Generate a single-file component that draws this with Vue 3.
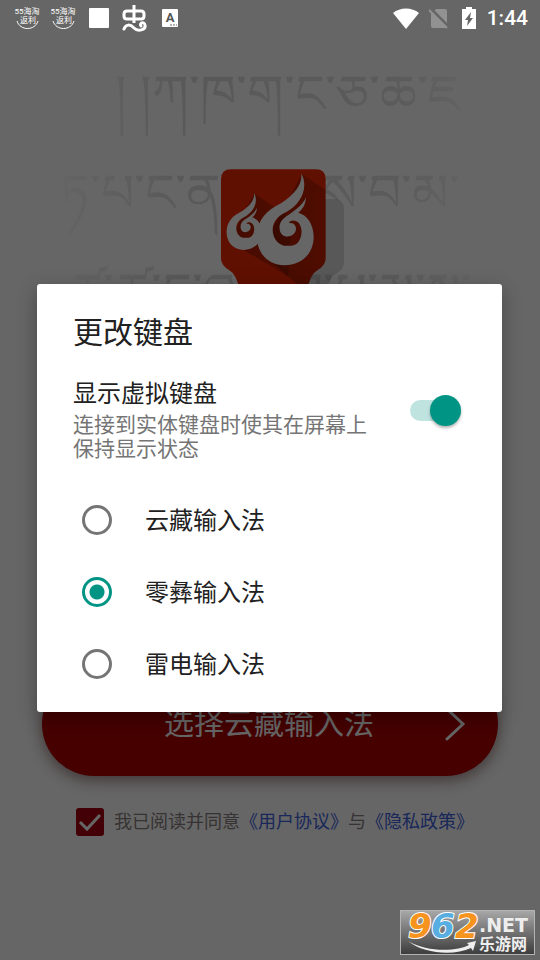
<template>
  <div class="screen">
    <header class="status-bar">
      <div class="status-group">
        <svg v-for="n in 2" :key="n" class="notice" viewBox="0 0 26 26">
          <text x="13" y="9" class="tiny">55海淘</text>
          <text x="14" y="18" class="tiny">返利</text>
          <path d="M3 16C6 26 21 26 24 16" fill="none" stroke="#fff" />
        </svg>
        <span class="square"></span>
        <svg class="worm" viewBox="0 0 26 28" fill="none" stroke="#fff" stroke-width="3">
          <path d="M12 1V19M5 7H19Q22 7 22 10V12Q22 15 19 15H5Q2 15 2 12V10Q2 7 5 7Z" />
          <path d="M2 25C4 20 8 20 12 24C16 28 24 26 23 21C22 17 17 19 19 22" stroke-linecap="round" />
        </svg>
        <svg class="letter" viewBox="0 0 16 18">
          <rect width="16" height="18" rx="1" fill="#fff" />
          <text x="8" y="13" class="letter-a">A</text>
          <path d="M8 16H10M11 16H13M14 16H15" stroke="#666" />
        </svg>
      </div>
      <div class="status-group">
        <svg class="wifi" viewBox="0 0 26 21">
          <path d="M0 5C7 -1 19 -1 26 5L13 21Z" fill="#fff" />
        </svg>
        <svg class="sim" viewBox="0 0 20 21">
          <path d="M7 1H16Q18 1 18 3V18Q18 20 16 20H4Q2 20 2 18V6Z" fill="#929292" />
          <path d="M1 0L20 19" stroke="#666" stroke-width="3" />
          <path d="M0 2L18 20" stroke="#929292" stroke-width="2" />
        </svg>
        <svg class="battery" viewBox="0 0 14 22">
          <path d="M4 0H10V2H14V22H0V2H4Z" fill="#fff" />
          <path d="M9 5L3 13H6L5 19L11 11H8Z" fill="#666" />
        </svg>
        <time class="clock">1:44</time>
      </div>
    </header>

    <main class="app">
      <svg class="hero" viewBox="0 36 540 294" aria-hidden="true">
        <defs>
          <linearGradient id="fade" gradientUnits="userSpaceOnUse" x1="60" x2="480" y1="0" y2="0">
            <stop offset="0" stop-color="#000" stop-opacity="0.02" />
            <stop offset="0.3" stop-color="#000" stop-opacity="0.13" />
            <stop offset="0.8" stop-color="#000" stop-opacity="0.11" />
            <stop offset="1" stop-color="#000" stop-opacity="0.02" />
          </linearGradient>
          <linearGradient id="shade" x1="0" x2="1">
            <stop offset="0" stop-color="#000" stop-opacity="0.3" />
            <stop offset="1" stop-color="#000" stop-opacity="0.15" />
          </linearGradient>
          <clipPath id="badge-clip">
            <path :d="badgePath" />
          </clipPath>
        </defs>
        <g class="script" fill="url(#fade)">
          <text x="115" y="112">། །ཀ་ཁ་ག་ང་ཅ་ཆ་ཇ</text>
          <text x="60" y="211">ཏ་པ་ང་ན</text>
          <text x="460" y="211" text-anchor="end">ས་བ་མ་</text>
          <text x="70" y="310">ཙ་ཚ་ད་ཞ་ཟ་བ་པ་མ་ས་</text>
        </g>
        <g transform="translate(205 160) scale(.3333)">
          <path d="M350 117H387Q417 117 417 147V310Q415 330 395 340Q375 350 365 390H300V117Z" fill="#000" opacity="0.14" />
          <path :d="badgePath" fill="#f02800" />
          <g clip-path="url(#badge-clip)" fill="url(#shade)">
            <path d="M290 42L400 116V420H330L165 275L250 120Z" />
            <path d="M148 100L260 178L250 350L75 245L120 150Z" />
          </g>
          <path :d="flamePath" fill="#fff" />
          <path :d="flamePath" fill="#fff" transform="translate(-32 74) scale(.62)" />
        </g>
      </svg>

      <button class="pick-btn" type="button">
        <span class="pick-label">选择云藏输入法</span>
        <svg class="chevron" viewBox="0 0 22 34">
          <path d="M3 2L19 17L3 32" fill="none" stroke="#fff" stroke-width="3" stroke-linecap="round" />
        </svg>
      </button>

      <div class="agreement">
        <input id="agree" v-model="agreed" class="agree-box" type="checkbox" />
        <label for="agree">我已阅读并同意</label>
        <a href="#terms">《用户协议》</a>
        <span>与</span>
        <a href="#privacy">《隐私政策》</a>
      </div>
    </main>

    <div class="scrim">
      <section class="dialog" role="dialog" aria-labelledby="dialog-title">
        <h1 id="dialog-title">更改键盘</h1>
        <label class="switch-row">
          <span class="switch-text">
            <span class="switch-name">显示虚拟键盘</span>
            <span class="switch-summary">连接到实体键盘时使其在屏幕上保持显示状态</span>
          </span>
          <input v-model="showKeyboard" class="switch" type="checkbox" />
        </label>
        <label v-for="item in keyboards" :key="item" class="option">
          <input v-model="selected" class="radio" type="radio" name="keyboard" :value="item" />
          <span class="option-name">{{ item }}</span>
        </label>
      </section>
    </div>

    <svg class="site-mark" viewBox="0 0 135 45">
      <defs>
        <linearGradient id="plate" x2="0" y2="1">
          <stop offset="0" stop-color="#a8a8a8" />
          <stop offset="1" stop-color="#3c3c3c" />
        </linearGradient>
      </defs>
      <rect x="0.5" y="0.5" width="134" height="44" fill="url(#plate)" stroke="#b4b4b4" />
      <g class="digits">
        <text x="8" y="28" fill="#f7941d">9</text>
        <text x="31" y="28" fill="#58aee0">6</text>
        <text x="55" y="28" fill="#f7941d">2</text>
      </g>
      <path d="M8 31C28 43 58 41 69 35L67 33L76 31L73 41L71 38C54 46 24 44 8 31Z" fill="#eee" />
      <text x="79" y="22" class="net">.NET</text>
      <text x="79" y="40" class="site-name">乐游网</text>
    </svg>
  </div>
</template>

<script setup>
import { ref } from "vue";

const keyboards = ["云藏输入法", "零彝输入法", "雷电输入法"];
const selected = ref("零彝输入法");
const showKeyboard = ref(true);
const agreed = ref(true);

const badgePath =
  "M78 28H332Q362 28 362 58V298Q360 318 338 330Q316 342 306 390H104Q94 342 72 330Q50 318 48 298V58Q48 28 78 28Z";
const flamePath =
  "M289 40C292 72 272 100 228 130C185 150 158 180 156 225C154 280 190 315 238 316C290 316 327 280 326 228C325 190 305 165 280 158C296 146 302 130 303 112C294 134 270 152 250 165C228 178 222 192 224 208C226 226 240 232 252 229C268 226 276 212 272 200C268 190 260 188 252 190C254 180 272 178 282 190C294 206 291 232 280 246C274 254 265 257 258 257L236 257C214 250 203 232 203 208C204 184 220 166 245 155C285 134 313 85 289 40Z";
</script>

<style>
body {
  background: #fff;
}
</style>

<style scoped>
.screen {
  position: relative;
  display: flex;
  flex-direction: column;
  min-height: 100vh;
  overflow: hidden;
  font-family: Roboto, "Noto Sans CJK SC", sans-serif;
}
.status-bar {
  position: relative;
  z-index: 2;
  display: flex;
  justify-content: space-between;
  height: 36px;
  padding: 0 12px 0 14px;
}
.status-group {
  display: flex;
  align-items: center;
  gap: 10px;
}
.notice {
  width: 26px;
  height: 26px;
}
.tiny {
  font-size: 8px;
  fill: #fff;
  text-anchor: middle;
}
.square {
  width: 20px;
  height: 20px;
  margin: 0 3px;
  border-radius: 1px;
  background: #fff;
}
.worm {
  width: 26px;
  height: 28px;
}
.letter {
  width: 16px;
  height: 18px;
  margin-left: 4px;
}
.letter-a {
  font-size: 13px;
  font-weight: 700;
  fill: #555;
  text-anchor: middle;
}
.wifi {
  width: 26px;
  height: 21px;
}
.sim {
  width: 20px;
  height: 21px;
}
.battery {
  width: 14px;
  height: 22px;
  margin-left: 3px;
}
.clock {
  margin-left: 1px;
  color: #fff;
  font-size: 21px;
  font-weight: 500;
}
.app {
  display: flex;
  flex: 1;
  flex-direction: column;
}
.hero {
  width: 100%;
}
.script {
  font-size: 52px;
}
.pick-btn {
  display: flex;
  align-items: center;
  height: 104px;
  margin: auto 42px 0;
  padding: 0 32px 0 30px;
  border: none;
  border-radius: 52px;
  background: #b00000;
  box-shadow: 0 4px 16px rgba(60, 0, 0, 0.5);
  color: #fff;
  font-family: inherit;
  font-size: 30px;
  cursor: pointer;
}
.pick-label {
  flex: 1;
  padding: 0 0 6px 22px;
}
.chevron {
  width: 22px;
  height: 34px;
}
.agreement {
  display: flex;
  align-items: center;
  justify-content: center;
  margin: 32px 0 124px;
  padding-left: 10px;
  color: #8a8080;
  font-size: 18px;
  line-height: 28px;
}
.agreement a {
  color: #4062e0;
  text-decoration: none;
}
.agree-box {
  width: 28px;
  height: 28px;
  margin: 0 10px 0 0;
  border-radius: 3px;
  appearance: none;
  background: #a80010;
}
.agree-box:checked {
  background: #a80010
    url("data:image/svg+xml,%3Csvg xmlns='http://www.w3.org/2000/svg' viewBox='0 0 28 28'%3E%3Cpath d='M4 14l7 7L24 7' fill='none' stroke='white' stroke-width='3'/%3E%3C/svg%3E");
}
.scrim {
  position: absolute;
  inset: 0;
  z-index: 1;
  display: flex;
  align-items: center;
  padding: 36px 38px 0 37px;
  background: rgba(0, 0, 0, 0.6);
}
.dialog {
  flex: 1;
  padding: 27px 36px 12px;
  border-radius: 3px;
  background: #fff;
  box-shadow: 0 6px 20px rgba(0, 0, 0, 0.3);
  color: #212121;
}
.dialog h1 {
  margin: 0 0 23px;
  font-size: 30px;
  font-weight: 400;
  line-height: 44px;
}
.switch-row {
  display: flex;
  align-items: flex-start;
  justify-content: space-between;
  padding-bottom: 23px;
}
.switch-text {
  display: flex;
  flex-direction: column;
  gap: 3px;
  max-width: 300px;
}
.switch-name {
  font-size: 24px;
  line-height: 32px;
}
.switch-summary {
  color: #757575;
  font-size: 21px;
  line-height: 24px;
}
.switch {
  position: relative;
  width: 46px;
  height: 21px;
  margin: 22px 10px 0 0;
  border-radius: 11px;
  appearance: none;
  background: #bfe4e0;
}
.switch::after {
  content: "";
  position: absolute;
  top: -5px;
  left: 0;
  width: 31px;
  height: 31px;
  border-radius: 50%;
  background: #f1f1f1;
  box-shadow: 0 2px 3px rgba(0, 0, 0, 0.3);
}
.switch:checked::after {
  right: -5px;
  left: auto;
  background: #009485;
}
.option {
  display: flex;
  align-items: center;
  gap: 33px;
  height: 72px;
  padding-left: 9px;
  font-size: 24px;
}
.option-name {
  padding-bottom: 4px;
}
.radio {
  width: 30px;
  height: 30px;
  margin: 0;
  border: 3px solid #757575;
  border-radius: 50%;
  appearance: none;
}
.radio:checked {
  border-color: #009485;
  background: radial-gradient(#009485 7px, #fff 8px);
}
.site-mark {
  position: absolute;
  right: 5px;
  bottom: 5px;
  z-index: 3;
  width: 135px;
  height: 45px;
  overflow: visible;
}
.digits {
  font-family: "DejaVu Sans", sans-serif;
  font-size: 34px;
  font-style: italic;
  font-weight: 700;
  stroke: #fff;
  stroke-width: 2px;
  paint-order: stroke;
}
.net {
  font-family: "DejaVu Sans", sans-serif;
  font-size: 19px;
  font-weight: 700;
  fill: #eee;
}
.site-name {
  font-size: 16px;
  font-weight: 700;
  fill: #eee;
}
</style>
